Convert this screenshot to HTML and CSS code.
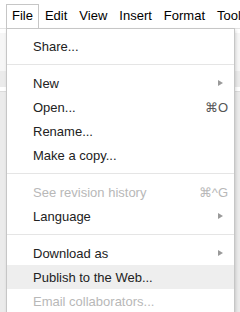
FILE: index.html
```html
<!DOCTYPE html>
<html lang="en">
<head>
    <meta charset="UTF-8">
    <title>File menu</title>
    <link rel="stylesheet" href="styles.css">
</head>
<body>
    <div class="menubar">
        <span class="menubar-item active">File</span>
        <span class="menubar-item">Edit</span>
        <span class="menubar-item">View</span>
        <span class="menubar-item">Insert</span>
        <span class="menubar-item">Format</span>
        <span class="menubar-item">Tools</span>
    </div>
    <div class="toolbar"></div>
    <div class="ruler"></div>
    <div class="workspace"></div>

    <div class="menu">
        <div class="menu-item">Share...</div>
        <div class="separator"></div>
        <div class="menu-item">New <span class="arrow"></span></div>
        <div class="menu-item">Open... <span class="shortcut">⌘O</span></div>
        <div class="menu-item">Rename...</div>
        <div class="menu-item">Make a copy...</div>
        <div class="separator"></div>
        <div class="menu-item disabled">See revision history <span class="shortcut">⌘^G</span></div>
        <div class="menu-item">Language <span class="arrow"></span></div>
        <div class="separator"></div>
        <div class="menu-item">Download as <span class="arrow"></span></div>
        <div class="menu-item highlight">Publish to the Web...</div>
        <div class="menu-item disabled">Email collaborators...</div>
    </div>
</body>
</html>
```

FILE: styles.css
```css
html, body {
    height: 312px;
    overflow: hidden;
}
body {
    font-family: 'Liberation Sans', Arial, sans-serif;
    font-size: 13px;
    margin: 0;
    padding: 0;
    background-color: #fff;
    color: #222;
}
.menubar {
    display: flex;
    padding: 4px 0 0 6px;
    height: 29px;
    box-sizing: border-box;
    white-space: nowrap;
    overflow: hidden;
    border-bottom: 1px solid #e3e3e3;
}
.menubar-item {
    display: block;
    flex-shrink: 0;
    padding: 0 5px;
    line-height: 22px;
    border: 1px solid transparent;
    border-bottom: none;
    color: #000;
}
.menubar-item.active {
    position: relative;
    z-index: 2;
    background-color: #fff;
    border-color: #c6c6c6;
    padding-bottom: 2px;
}
.toolbar {
    height: 38px;
    background-color: #f6f6f6;
    border-top: 4px solid #fff;
}
.ruler {
    height: 16px;
    background-color: #ebebeb;
    border-bottom: 4px solid #fff;
}
.workspace {
    height: 220px;
    background-color: #ebebeb;
    border-top: 1px solid #dcdcdc;
}
.menu {
    position: absolute;
    top: 28px;
    left: 6px;
    width: 229px;
    box-sizing: border-box;
    padding: 5px 0;
    background-color: #fff;
    border: 1px solid #c6c6c6;
    box-shadow: 1px 2px 3px rgba(0, 0, 0, 0.15);
    z-index: 1;
}
.menu-item {
    display: flex;
    justify-content: space-between;
    align-items: center;
    height: 24px;
    padding: 0 6px 0 26px;
    white-space: nowrap;
}
.menu-item.disabled {
    color: #b8b8b8;
}
.menu-item.highlight {
    background-color: #eeeeee;
}
.shortcut {
    color: #555;
}
.disabled .shortcut {
    color: #b8b8b8;
}
.arrow {
    width: 0;
    height: 0;
    margin-right: 5px;
    border-top: 3.5px solid transparent;
    border-bottom: 3.5px solid transparent;
    border-left: 5px solid #9a9a9a;
}
.separator {
    height: 1px;
    margin: 6px 0;
    background-color: #e5e5e5;
}
```
